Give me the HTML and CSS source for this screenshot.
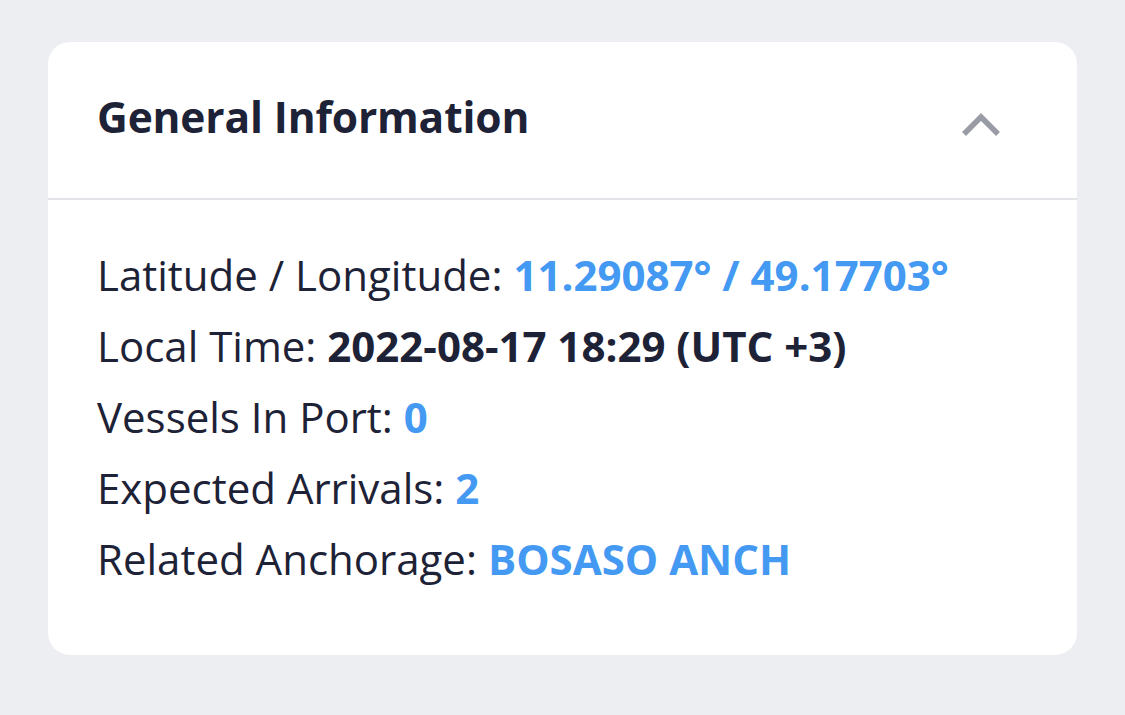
FILE: index.html
```html
<!DOCTYPE html>
<html lang="en">
<head>
<meta charset="utf-8">
<title>General Information</title>
<link rel="stylesheet" href="styles.css">
</head>
<body>
<section class="card">
  <header class="card-header">
    <h2 class="card-title">General Information</h2>
    <button class="toggle" aria-label="Collapse">
      <svg width="40" height="26" viewBox="0 0 40 26"><path d="M3 22 L20 5 L37 22" fill="none" stroke="#9a9ca5" stroke-width="5.5" stroke-linecap="butt" stroke-linejoin="miter"/></svg>
    </button>
  </header>
  <div class="card-body">
    <p class="row">Latitude / Longitude: <span class="val link">11.29087° / 49.17703°</span></p>
    <p class="row">Local Time: <span class="val">2022-08-17 18:29 (UTC +3)</span></p>
    <p class="row">Vessels In Port: <span class="val link">0</span></p>
    <p class="row">Expected Arrivals: <span class="val link">2</span></p>
    <p class="row">Related Anchorage: <span class="val link">BOSASO ANCH</span></p>
  </div>
</section>
</body>
</html>
```
FILE: styles.css
```css
html, body { margin: 0; padding: 0; }
body {
  background: #eceef2;
  font-family: "Open Sans", "Noto Sans", sans-serif;
  color: #1d2236;
  padding: 42px 48px 60px 48px;
}
.card {
  background: #ffffff;
  border-radius: 22px;
  height: 613px;
  box-sizing: border-box;
}
.card-header {
  height: 158px;
  border-bottom: 2px solid #e3e4e8;
  display: flex;
  align-items: center;
  justify-content: space-between;
  padding: 0 76px 0 49px;
  box-sizing: border-box;
}
.card-title {
  margin: -7px 0 0 0;
  font-size: 42.5px;
  font-weight: 700;
  letter-spacing: -0.15px;
  color: #1d2236;
}
.toggle {
  border: 0;
  background: none;
  padding: 0;
  margin-top: 10px;
  display: flex;
}
.card-body {
  padding: 39px 49px;
}
.row {
  margin: 0;
  font-size: 42px;
  line-height: 71px;
}
.val { font-weight: 700; }
.link { color: #4499f2; }
```
